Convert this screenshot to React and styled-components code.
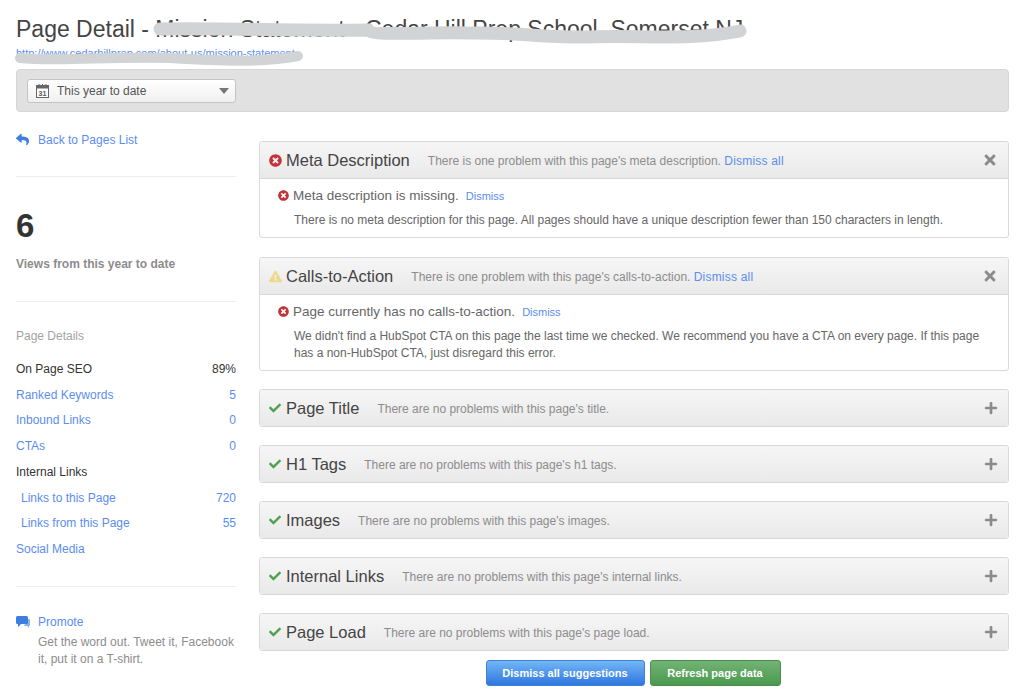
import React from "react";
import styled, { createGlobalStyle } from "styled-components";
import { FaTimesCircle, FaExclamationTriangle, FaCheck, FaTimes, FaPlus, FaReply } from "react-icons/fa";

const GlobalStyle = createGlobalStyle`
  html, body {
    margin: 0;
    padding: 0;
    background: #fff;
    font-family: "Liberation Sans", Arial, sans-serif;
    color: #555;
  }
  * { box-sizing: border-box; }
`;

const Page = styled.div`
  position: relative;
  width: 1024px;
  height: 699px;
  overflow: hidden;
  padding: 16px 15px 0 16px;
`;

const Title = styled.h1`
  margin: 0;
  font-size: 23px;
  line-height: 26px;
  font-weight: 400;
  color: #444;
  white-space: nowrap;
`;

const PageUrl = styled.a`
  display: block;
  margin-top: 5px;
  height: 22px;
  font-size: 11px;
  line-height: 13px;
  color: #5b8def;
`;

const Toolbar = styled.div`
  height: 43px;
  padding: 9px 10px;
  background: #e1e1e1;
  border: 1px solid #d6d6d6;
  border-radius: 4px;
`;

const DateSelect = styled.div`
  display: flex;
  align-items: center;
  width: 209px;
  height: 24px;
  padding: 0 6px 0 8px;
  background: linear-gradient(#fff, #f0f0f0);
  border: 1px solid #c4c4c4;
  border-radius: 3px;
  font-size: 12px;
  color: #555;
`;

const DateLabel = styled.span`
  flex: 1;
  margin-left: 8px;
`;

const Caret = styled.span`
  width: 0;
  height: 0;
  border-left: 5px solid transparent;
  border-right: 5px solid transparent;
  border-top: 6px solid #777;
`;

const Columns = styled.div`
  display: flex;
  gap: 23px;
`;

const Sidebar = styled.aside`
  width: 220px;
  flex: none;
  padding-top: 20px;
  font-size: 12px;
`;

const BackLink = styled.a`
  display: flex;
  align-items: center;
  gap: 9px;
  height: 15px;
  color: #5b8def;
  svg { color: #3d7fe0; font-size: 13px; }
`;

const Divider = styled.hr`
  margin: ${(p) => p.$top}px 0 0;
  border: 0;
  border-top: 1px solid #eee;
`;

const BigNumber = styled.div`
  margin-top: 30px;
  font-size: 33px;
  line-height: 38px;
  font-weight: 700;
  color: #333;
`;

const ViewsLabel = styled.div`
  margin-top: 12px;
  font-weight: 700;
  line-height: 15px;
  color: #8c8c8c;
`;

const SectionLabel = styled.div`
  margin-top: 27px;
  margin-bottom: 12px;
  line-height: 15px;
  color: #a3a3a3;
`;

const StatRow = styled.div`
  display: flex;
  justify-content: space-between;
  align-items: center;
  height: 25.75px;
  padding-left: ${(p) => (p.$indent ? 5 : 0)}px;
  color: ${(p) => (p.$plain ? "#333" : "#5b8def")};
`;

const Promo = styled.div`
  display: flex;
  gap: 8px;
  margin-top: 28px;
  svg { flex: none; margin-top: 1px; }
`;

const PromoText = styled.div`
  line-height: 17px;
  color: #8c8c8c;
  width: 200px;
  a { display: block; color: #5b8def; margin-bottom: 4px; line-height: 15px; }
`;

const Main = styled.main`
  flex: 1;
  padding-top: 29px;
`;

const Panel = styled.section`
  margin-bottom: ${(p) => p.$gap}px;
  border: 1px solid #d9d9d9;
  border-radius: 3px;
  background: #fff;
`;

const PanelHeader = styled.header`
  display: flex;
  align-items: center;
  height: ${(p) => (p.$open ? 37 : 36)}px;
  padding: 0 10px 0 9px;
  background: linear-gradient(#f6f6f6, #e9e9e9);
  border-bottom: ${(p) => (p.$open ? "1px solid #d9d9d9" : "0")};
  border-radius: ${(p) => (p.$open ? "3px 3px 0 0" : "3px")};
`;

const HeaderIcon = styled.span`
  display: flex;
  width: 13px;
  margin-right: 4px;
  font-size: ${(p) => p.$size}px;
  color: ${(p) => p.$color};
`;

const PanelName = styled.h2`
  margin: 0 18px 0 0;
  font-size: 16.5px;
  font-weight: 400;
  color: #444;
  white-space: nowrap;
`;

const PanelNote = styled.span`
  flex: 1;
  padding-top: 2px;
  font-size: 12px;
  color: #8c8c8c;
  white-space: nowrap;
  a { color: #5b8def; letter-spacing: 0.2px; }
`;

const CornerIcon = styled.span`
  display: flex;
  font-size: ${(p) => p.$size}px;
  color: #8a8a8a;
`;

const PanelBody = styled.div`
  padding: 8px 18px 8.5px 18px;
`;

const IssueLine = styled.div`
  display: flex;
  align-items: center;
  height: 17px;
  font-size: 13.5px;
  color: #666;
  svg { color: #c2343a; font-size: 11px; margin-right: 4px; }
  a { margin-left: 7px; font-size: 11px; color: #5b8def; }
`;

const IssueText = styled.p`
  margin: 8px 0 0 16px;
  font-size: 12px;
  line-height: 16.5px;
  color: #666;
`;

const Actions = styled.div`
  display: flex;
  justify-content: center;
  gap: 5px;
  margin-top: -9px;
  padding-right: 2px;
`;

const ActionButton = styled.button`
  height: 26px;
  width: ${(p) => p.$width}px;
  padding: 0;
  border: 1px solid ${(p) => (p.$green ? "#4d8b4f" : "#3f7fd6")};
  border-radius: 3px;
  background: ${(p) => (p.$green ? "linear-gradient(#72b374, #4a9a4e)" : "linear-gradient(#72b6f5, #2f76e0)")};
  color: #fff;
  font: 700 11px "Liberation Sans", Arial, sans-serif;
`;

const Scribbles = styled.svg`
  position: absolute;
  left: 0;
  top: 0;
  pointer-events: none;
`;

const CalendarIcon = () => (
  <svg width="13" height="14" viewBox="0 0 13 14">
    <rect x="0.5" y="1.5" width="12" height="12" fill="#fff" stroke="#666" />
    <rect x="0.5" y="1.5" width="12" height="3" fill="#666" />
    <path d="M3 0v3M6.5 0v3M10 0v3" stroke="#666" />
    <text x="6.5" y="12" textAnchor="middle" fontSize="7" fontWeight="700" fill="#555" fontFamily="Liberation Sans">31</text>
  </svg>
);

const PromoteIcon = () => (
  <svg width="14" height="13" viewBox="0 0 14 13">
    <path d="M11 3h2a1 1 0 0 1 1 1v5a1 1 0 0 1-1 1v2l-2-2H8z" fill="#8fb4ea" />
    <path d="M1.5 0h9A1.5 1.5 0 0 1 12 1.5v5A1.5 1.5 0 0 1 10.5 8H5l-3 3V8h-.5A1.5 1.5 0 0 1 0 6.5v-5A1.5 1.5 0 0 1 1.5 0z" fill="#3d7fe0" />
  </svg>
);

const openPanels = [
  {
    name: "Meta Description",
    warn: false,
    gap: 19,
    note: "There is one problem with this page's meta description.",
    issue: "Meta description is missing.",
    text: "There is no meta description for this page. All pages should have a unique description fewer than 150 characters in length.",
  },
  {
    name: "Calls-to-Action",
    warn: true,
    gap: 18.5,
    note: "There is one problem with this page's calls-to-action.",
    issue: "Page currently has no calls-to-action.",
    text: "We didn't find a HubSpot CTA on this page the last time we checked. We recommend you have a CTA on every page. If this page has a non-HubSpot CTA, just disregard this error.",
  },
];

const closedPanels = [
  { name: "Page Title", note: "title" },
  { name: "H1 Tags", note: "h1 tags" },
  { name: "Images", note: "images" },
  { name: "Internal Links", note: "internal links" },
  { name: "Page Load", note: "page load" },
];

const stats = [
  { label: "On Page SEO", value: "89%", plain: true },
  { label: "Ranked Keywords", value: "5" },
  { label: "Inbound Links", value: "0" },
  { label: "CTAs", value: "0" },
  { label: "Internal Links", plain: true },
  { label: "Links to this Page", value: "720", indent: true },
  { label: "Links from this Page", value: "55", indent: true },
  { label: "Social Media" },
];

export default function App() {
  return (
    <Page>
      <GlobalStyle />
      <Title>Page Detail - Mission Statement - Cedar Hill Prep School, Somerset NJ</Title>
      <PageUrl>http://www.cedarhillprep.com/about-us/mission-statement</PageUrl>
      <Toolbar>
        <DateSelect>
          <CalendarIcon />
          <DateLabel>This year to date</DateLabel>
          <Caret />
        </DateSelect>
      </Toolbar>
      <Columns>
        <Sidebar>
          <BackLink><FaReply />Back to Pages List</BackLink>
          <Divider $top={29} />
          <BigNumber>6</BigNumber>
          <ViewsLabel>Views from this year to date</ViewsLabel>
          <Divider $top={29} />
          <SectionLabel>Page Details</SectionLabel>
          {stats.map((s) => (
            <StatRow key={s.label} $plain={s.plain} $indent={s.indent}>
              <span>{s.label}</span>
              <span>{s.value}</span>
            </StatRow>
          ))}
          <Divider $top={24} />
          <Promo>
            <PromoteIcon />
            <PromoText>
              <a>Promote</a>
              Get the word out. Tweet it, Facebook it, put it on a T-shirt.
            </PromoText>
          </Promo>
        </Sidebar>
        <Main>
          {openPanels.map((p) => (
            <Panel key={p.name} $gap={p.gap}>
              <PanelHeader $open>
                <HeaderIcon $size={13} $color={p.warn ? "#ecd98c" : "#c2343a"}>
                  {p.warn ? <FaExclamationTriangle /> : <FaTimesCircle />}
                </HeaderIcon>
                <PanelName>{p.name}</PanelName>
                <PanelNote>{p.note} <a>Dismiss all</a></PanelNote>
                <CornerIcon $size={16}><FaTimes /></CornerIcon>
              </PanelHeader>
              <PanelBody>
                <IssueLine><FaTimesCircle />{p.issue}<a>Dismiss</a></IssueLine>
                <IssueText>{p.text}</IssueText>
              </PanelBody>
            </Panel>
          ))}
          {closedPanels.map((p) => (
            <Panel key={p.name} $gap={18}>
              <PanelHeader>
                <HeaderIcon $size={12} $color="#4ea24f"><FaCheck /></HeaderIcon>
                <PanelName>{p.name}</PanelName>
                <PanelNote>There are no problems with this page's {p.note}.</PanelNote>
                <CornerIcon $size={14}><FaPlus /></CornerIcon>
              </PanelHeader>
            </Panel>
          ))}
          <Actions>
            <ActionButton $width={159}>Dismiss all suggestions</ActionButton>
            <ActionButton $green $width={131}>Refresh page data</ActionButton>
          </Actions>
        </Main>
      </Columns>
      <Scribbles width="1024" height="80" viewBox="0 0 1024 80">
        <path d="M160 29C230 28 300 31 368 30C372 36 420 32 470 33C520 32 540 38 590 37C640 35 690 41 740 31" fill="none" stroke="#d2d3d5" strokeWidth="13" strokeLinecap="round" />
        <path d="M20 58C60 62 110 56 170 58C220 61 260 63 298 56" fill="none" stroke="#d2d3d5" strokeWidth="10" strokeLinecap="round" />
      </Scribbles>
    </Page>
  );
}
